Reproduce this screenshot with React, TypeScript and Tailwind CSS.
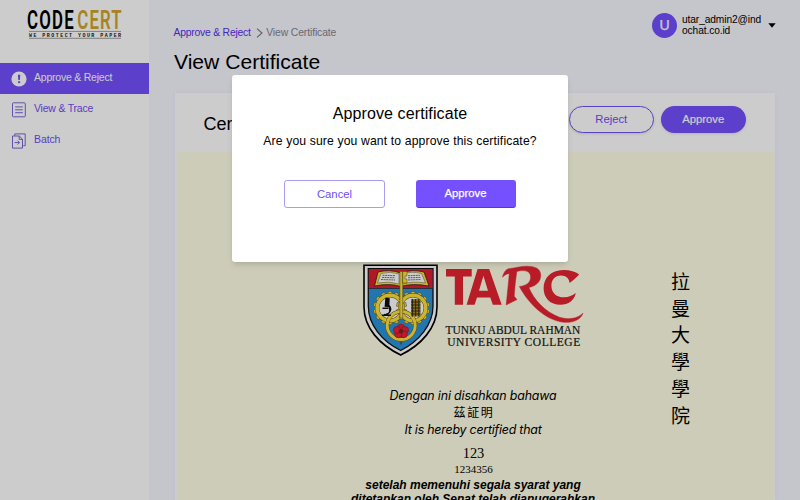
import React from "react";

function Logo() {
  return (
    <svg className="ml-[27px] mt-2 block overflow-visible" width="96" height="32" viewBox="27 8 96 32">
      <g fontFamily="Roboto, sans-serif" fontWeight="600" fontSize="25.5">
        <text x="0" y="0" transform="translate(27.1 29.3) scale(.66 1)" textLength="70.5" lengthAdjust="spacing" fill="#000">CODE</text>
        <text x="0" y="0" transform="translate(77.3 29.3) scale(.66 1)" textLength="67" lengthAdjust="spacing" fill="#d2a52a">CERT</text>
      </g>
      <path d="M29 31.4H121M29 38.3H121" stroke="#777" strokeWidth=".7" />
      <text x="29" y="36.8" fontFamily="'Liberation Mono', monospace" fontWeight="700" fontSize="5" textLength="92" fill="#222">WE PROTECT YOUR PAPER</text>
    </svg>
  );
}

function AlertIcon() {
  return (
    <svg width="16" height="16" viewBox="0 0 16 16">
      <circle cx="8" cy="8" r="7.6" fill="#fff" />
      <path d="M6.9 3.8h2.4l-.4 5.2H7.3z" fill="#7450fe" />
      <circle cx="8.1" cy="11.2" r="1.15" fill="#7450fe" />
    </svg>
  );
}

function ListIcon() {
  return (
    <svg width="16" height="16" viewBox="0 0 16 16" fill="none" stroke="#7b66d9" strokeWidth="1">
      <rect x="1.5" y=".8" width="12.8" height="14" rx=".8" />
      <path d="M4.2 4.9h7.6M4.2 7.8h7.6M4.2 10.7h7.6" />
    </svg>
  );
}

function BatchIcon() {
  return (
    <svg width="16" height="16" viewBox="0 0 16 16" fill="none" stroke="#7b66d9" strokeWidth="1">
      <path d="M3.8 2.9V.9h10.4v11.8h-2" />
      <path d="M1.5 3h6.8l3.2 3.2v8.9h-10zM8.2 3v3.4h3.3" />
      <path d="M3.6 9.6h4.8M6.6 7.7l1.9 1.9-1.9 1.9" />
    </svg>
  );
}

const gearTeeth = Array.from({ length: 14 }, (_, i) => i * (360 / 14));

function Gear({ cx, cy }: { cx: number; cy: number }) {
  return (
    <g transform={`translate(${cx} ${cy})`}>
      {gearTeeth.map((a) => (
        <rect key={a} x="-1.9" y="-16.6" width="3.8" height="4" fill="#ffe23c" stroke="#5c5420" strokeWidth=".5" transform={`rotate(${a})`} />
      ))}
      <circle r="12.8" fill="none" stroke="#5c5420" strokeWidth="4.4" />
      <circle r="12.8" fill="none" stroke="#ffe23c" strokeWidth="3.6" />
    </g>
  );
}

function Crest() {
  return (
    <svg width="76" height="92" viewBox="363 264 76 92" className="block shrink-0">
      <path d="M364 265.3H437V307C437 328 421 345 400.7 355C380 345 364 328 364 307Z" fill="#fff" stroke="#000" strokeWidth="1.6" />
      <path d="M368.3 268.7H433V306C433 325 419 341 400.7 350.5C382 341 368.3 325 368.3 306Z" fill="#2a94dc" stroke="#111" strokeWidth="1.3" />
      <path d="M368.8 269.2H432.5V288.3H368.8Z" fill="#dc1f30" />
      <path d="M368.8 288.5H432.5" stroke="#222" strokeWidth=".7" />
      <path d="M374.5 286L378 272Q390 269 400.7 273Q412 269 424 272L429 286Q412 283 400.7 286.5Q390 283 374.5 286Z" fill="#ffe23c" stroke="#222" strokeWidth=".8" />
      <path d="M377.5 283L381 273.4Q391 271 399 274V284Q389 280.8 377.5 283ZM425.5 283L421.5 273.4Q411 271 403 274V284Q413 280.8 425.5 283Z" fill="#fff" stroke="#555" strokeWidth=".5" />
      <path d="M382.5 275.3l13 .4M382 277.4l13 .4M381 279.5l14 .5M408 275.7l12-.4M408 277.8l12.5-.4M408 280l13-.5" stroke="#777" strokeWidth="1" strokeDasharray="2 .6" />
      <circle cx="390" cy="308" r="13" fill="#fff" />
      <circle cx="413" cy="308" r="13" fill="#fff" />
      <Gear cx={390} cy={308} />
      <Gear cx={413} cy={308} />
      <circle cx="401.2" cy="325.5" r="14" fill="none" stroke="#5c5420" strokeWidth="3.8" />
      <circle cx="401.2" cy="325.5" r="14" fill="none" stroke="#ffe23c" strokeWidth="3" />
      <path d="M399.9 271.5h2.8V318h-2.8zM402.4 271.5h4.6v4.5h-2v3h2v4h-4.6z" fill="#ffe23c" stroke="#5c5420" strokeWidth=".5" />
      <path d="M386 298.5l3 .5-.4 7.5-3.2-.5zM388.6 305q3.6 3.4.6 7.6M382.5 308.3h6M382 315.3h9M384 314.4q3 1.2 5.5-2" stroke="#111" strokeWidth="1.5" fill="#111" />
      <rect x="411" y="299" width="9.5" height="17.5" fill="#a98822" />
      <path d="M412.5 299v17.5M415.6 299v17.5M418.8 299v17.5M411 302h9.5M411 305h9.5M411 308h9.5M411 311h9.5M411 314h9.5" stroke="#252010" strokeWidth=".8" />
      <g fill="#ef2035" stroke="#731a22" strokeWidth=".5">
        <circle cx="401" cy="327.6" r="3.6" />
        <circle cx="405" cy="330" r="3.6" />
        <circle cx="403.7" cy="334.2" r="3.6" />
        <circle cx="398.3" cy="334.2" r="3.6" />
        <circle cx="397" cy="330" r="3.6" />
      </g>
      <circle cx="401" cy="331.2" r="2.2" fill="#8c1923" />
      <path d="M399.2 330l1.8 2.5 1.8-2.5M400 342.5h2l-1 2z" stroke="#4c4610" strokeWidth=".6" fill="none" />
    </svg>
  );
}

function TarcLogo() {
  return (
    <svg width="145" height="92" viewBox="439 264 145 92" className="block shrink-0 overflow-visible">
      <g fill="#e52331">
        <path d="M446 269H471.7V276.4H463V304.7H454.8V276.4H446ZM477.6 269H489.2L501.7 304.7H492.8L490.3 297.5H477L474.6 304.7H466.6ZM483.4 275.8L479 290.8H488Z" fillRule="evenodd" />
        <path d="M502.4 277.2C504 271.8 506.2 268.6 510.5 268.4C514.5 268.2 520 266.2 527 266.2C535 266.3 540.8 268.8 540.7 275.3C540.6 281.8 536.6 285.6 528.8 287.6C534 299.5 544.5 311.8 559.5 317.3C569 320.2 578 318.3 583 313.2C580.5 319.8 573.5 322.8 564 322.3C545 320.3 528.5 303.5 519.4 286.6C526.5 285.5 530.4 282.6 530.6 277.4C530.7 272.2 527.2 270.4 521 270.6L516.8 271.4C515.5 280 514.7 288 514.2 296.3L517 299.6L506.2 304.9C507.2 294.8 508.3 284.5 509.3 273.4C506.6 273.8 504.6 275 502.4 277.2Z" stroke="#e52331" strokeWidth=".5" />
        <path d="M579.2 274.6C576.2 277.8 573.2 280.6 569.6 283C568.9 278.5 566.3 275.6 561 275.6C554.8 275.7 551.3 280 551.4 286.2C551.7 293.5 557.2 297.6 564.4 297.3C568.8 297.1 572.3 295.8 575.8 293C574.2 300.4 568.5 304.8 560.4 304.8C550.3 304.7 543.6 298.2 543.6 288.2C543.7 277.8 551.2 270.2 563 270.1C569.5 269.9 575 271.4 579.2 274.6Z" />
      </g>
      <g fontFamily="'Liberation Serif', serif" fill="#161616" stroke="#161616" strokeWidth=".2">
        <text x="445.5" y="333.6" fontSize="12.4" textLength="134.8" lengthAdjust="spacingAndGlyphs">TUNKU ABDUL RAHMAN</text>
        <text x="447.2" y="346.2" fontSize="11.5" textLength="133" lengthAdjust="spacing">UNIVERSITY COLLEGE</text>
      </g>
    </svg>
  );
}

function Sidebar() {
  return (
    <aside className="flex h-full w-[148.5px] shrink-0 flex-col bg-white text-[10.5px] tracking-[-0.1px] text-[#704df5]">
      <Logo />
      <nav className="mt-[23px] flex flex-col">
        <a className="flex h-[31px] items-center gap-[7px] bg-[#7450fe] pl-[11px] text-white">
          <AlertIcon />
          <span className="pb-[2px] tracking-[-0.22px]">Approve &amp; Reject</span>
        </a>
        <a className="flex h-[31px] items-center gap-[7px] pl-[11px]">
          <ListIcon />
          <span className="pb-[2px] tracking-[-0.22px]">View &amp; Trace</span>
        </a>
        <a className="flex h-[31px] items-center gap-[7px] pl-[11px]">
          <BatchIcon />
          <span className="pb-px">Batch</span>
        </a>
      </nav>
    </aside>
  );
}

function Header() {
  return (
    <header className="flex h-[93px] justify-between">
      <div className="flex flex-col pl-[25px] pt-[25px]">
        <div className="flex h-[15px] items-center text-[10.4px] leading-[15px]">
          <span className="tracking-[-0.23px] text-[#5530f0]">Approve &amp; Reject</span>
          <svg width="7" height="10" viewBox="0 0 7 10" className="ml-[5px] mr-[3.5px]" fill="none" stroke="#777781" strokeWidth="1.1">
            <path d="M1 .6l5 4.4-5 4.4" />
          </svg>
          <span className="tracking-[-0.12px] text-[#85858e]">View Certificate</span>
        </div>
        <h1 className="ml-[0.5px] mt-[8px] text-[21.1px] leading-[28px] text-black">View Certificate</h1>
      </div>
      <div className="mr-6 flex h-[50px] items-center">
        <div className="flex h-[25px] w-[25px] items-center justify-center rounded-full bg-[#7450fe] text-[14px] text-white [-webkit-text-stroke:0.25px_white]">U</div>
        <div className="ml-[5px] w-[80px] pb-px text-[10.2px] leading-[11px] tracking-[-0.1px] text-black">
          utar_admin2@ind
          <br />
          ochat.co.id
        </div>
        <svg width="8" height="5" viewBox="0 0 8 5" className="ml-[6px]">
          <path d="M.3.2h7.4L4 4.8z" fill="#000" />
        </svg>
      </div>
    </header>
  );
}

function Certificate() {
  return (
    <div className="mx-[1.5px] flex h-[348px] bg-[#ffffe6] pl-[43px] text-black">
      <div className="flex w-[361px] flex-col items-center">
        <div className="mt-[112px] flex w-full pl-[143px]">
          <Crest />
          <TarcLogo />
        </div>
        <div className="flex w-[280px] shrink-0 translate-x-[73px] flex-col items-center whitespace-nowrap text-center">
          <p className="mt-[32px] font-[Inter] text-[12.4px] italic leading-[16px] tracking-[-0.15px] [font-feature-settings:'cv11']">Dengan ini disahkan bahawa</p>
          <p className="pl-[2px] font-['Noto_Sans_CJK_TC',sans-serif] text-[12px] leading-[15px] tracking-[1.6px]">茲証明</p>
          <p className="mt-[3px] font-[Inter] text-[12.4px] italic leading-[16px] tracking-[-0.22px] [font-feature-settings:'cv11']">It is hereby certified that</p>
          <p className="mt-[7px] pl-px font-['Liberation_Serif',serif] text-[14.4px] leading-[16px]">123</p>
          <p className="mt-[2px] pl-px font-['Liberation_Serif',serif] text-[11px] leading-[13px]">1234356</p>
          <p className="mt-[2px] text-[12px] font-bold italic leading-[15px]">setelah memenuhi segala syarat yang</p>
          <p className="text-[12px] font-bold italic leading-[13px]">ditetapkan oleh Senat telah dianugerahkan</p>
        </div>
      </div>
      <div className="ml-[89px] mt-[116px] flex w-[22px] flex-col items-center font-['Noto_Sans_CJK_TC',sans-serif] text-[19px] font-normal leading-[26.7px]">
        {["拉", "曼", "大", "學", "學", "院"].map((c, i) => (
          <span key={i}>{c}</span>
        ))}
      </div>
    </div>
  );
}

function ApproveDialog() {
  return (
    <div className="absolute inset-0 bg-black/20">
      <div role="dialog" className="ml-[232px] mt-[75px] flex h-[187px] w-[336px] flex-col items-center rounded-[3px] bg-white text-black shadow-md">
        <h2 className="mt-[29px] text-[16px] leading-[20px] tracking-[0.1px]">Approve certificate</h2>
        <p className="mt-[9px] text-[12.2px] leading-[16px] tracking-[0.13px]">Are you sure you want to approve this certificate?</p>
        <div className="mt-[31px] flex gap-[31px] text-[11.3px]">
          <button className="h-[28px] w-[101px] rounded-[3px] border border-[#a99af3] text-[#704df5]">Cancel</button>
          <button className="h-[28px] w-[100px] rounded-[3px] border-b border-[#5735d5] bg-[#7450fe] pr-px text-white [-webkit-text-stroke:0.25px_white]">Approve</button>
        </div>
      </div>
    </div>
  );
}

export default function App() {
  return (
    <div className="relative flex h-[500px] w-[800px] overflow-hidden bg-[#f7f7ff] font-['Liberation_Sans',Arial,sans-serif]">
      <Sidebar />
      <main className="flex min-w-0 flex-1 flex-col">
        <Header />
        <section className="ml-[26.5px] w-[600px] bg-white shadow-[0_0_4px_#eeeaff]">
          <div className="flex h-[59px] items-center pl-[28.5px] pr-[29px]">
            <h2 className="flex-1 pt-[2px] text-[18px] leading-none text-black">Certificate</h2>
            <button className="mb-[7px] mt-px h-[27px] w-[85.5px] rounded-full border border-[#7450fe] bg-white text-[11.3px] text-[#704df5] shadow">Reject</button>
            <button className="mb-[7px] ml-[6.5px] mt-px h-[27px] w-[85.5px] rounded-full bg-[#7450fe] text-[11.3px] text-white shadow [-webkit-text-stroke:0.2px_white]">Approve</button>
          </div>
          <Certificate />
        </section>
      </main>
      <ApproveDialog />
    </div>
  );
}
